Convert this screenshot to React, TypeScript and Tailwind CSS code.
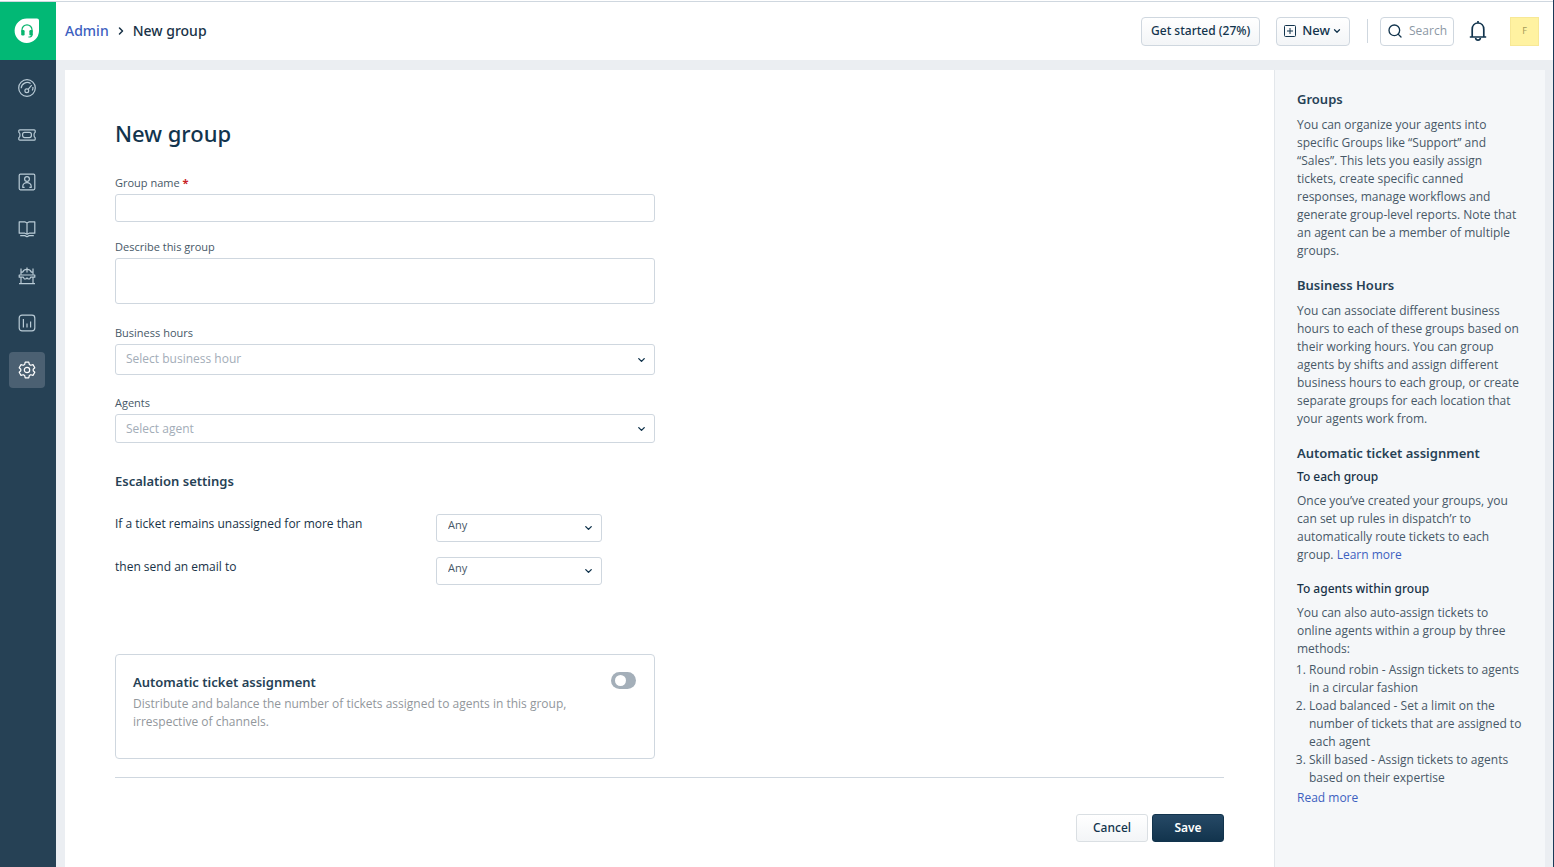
import { useState } from "react";
import type { ReactNode } from "react";
import { ChevronDown, ChevronRight, Search } from "lucide-react";

const navItems = [
  {
    label: "Dashboard",
    icon: (
      <>
        <circle cx="9" cy="9" r="8.3" />
        <path d="M3.2 9.2a6 6 0 0 1 9.4-4.6M14.9 8a6 6 0 0 1-.6 3.6M10.1 10.4l3.6-4.2" />
        <circle cx="8.8" cy="11.8" r="1.9" />
      </>
    ),
  },
  {
    label: "Tickets",
    icon: (
      <>
        <path d="M1.8 3.8h14.4a1 1 0 0 1 1 1v1.4c-1.6 1-1.6 4.6 0 5.6v1.4a1 1 0 0 1-1 1H1.8a1 1 0 0 1-1-1v-1.4c1.6-1 1.6-4.6 0-5.6V4.8a1 1 0 0 1 1-1z" />
        <rect x="4.6" y="6.4" width="8.8" height="5.2" rx="2" />
      </>
    ),
  },
  {
    label: "Contacts",
    icon: (
      <>
        <rect x="1.2" y="1.2" width="15.6" height="15.6" rx="1.2" />
        <circle cx="9" cy="6" r="2.4" />
        <path d="M6.6 14.4H4.8v-1.2a4.2 3.6 0 0 1 8.4 0v1.2h-1.8" />
      </>
    ),
  },
  {
    label: "Solutions",
    icon: (
      <>
        <path d="M1.2 1.8h5.6L9 3l2.2-1.2h5.6v11.4h-5.6L9 14.2l-2.2-1H1.2zM9 3v11" />
        <path d="M2.2 15.6h4.6L9 16.8l2.2-1.2h4.6" />
      </>
    ),
  },
  {
    label: "Forums",
    icon: (
      <>
        <path d="M3 1.4v6.4M15 1.4v6.4M3 10.2v6.2M15 10.2v6.2M1 16.6h16M9 .6v5" />
        <path d="M3 5.2h1.6C5.4 3.4 7 2.4 9 2.4s3.6 1 4.4 2.8H15" />
        <path d="M1.2 8h15.6v2.2h-4l-1.2 1.8h-1.4L9 10.8 7.8 12H6.4l-1.2-1.8h-4z" />
      </>
    ),
  },
  {
    label: "Analytics",
    icon: (
      <>
        <rect x="1.2" y="1.2" width="15.6" height="15.6" rx="2.8" />
        <path d="M5.4 5v8.4M9 9.6v3.8M12.6 7.6v5.8" />
      </>
    ),
  },
  {
    label: "Admin",
    active: true,
    icon: (
      <>
        <path d="M7.2 1.2h3.6l.5 2.2 1.5.9 2.2-.7 1.8 3.1L15.2 8.2v1.6l1.6 1.5-1.8 3.1-2.2-.7-1.5.9-.5 2.2H7.2l-.5-2.2-1.5-.9-2.2.7-1.8-3.1 1.6-1.5V8.2L1.2 6.7 3 3.6l2.2.7 1.5-.9z" />
        <circle cx="9" cy="9" r="2.7" />
      </>
    ),
  },
];

const methods = [
  "Round robin - Assign tickets to agents in a circular fashion",
  "Load balanced - Set a limit on the number of tickets that are assigned to each agent",
  "Skill based - Assign tickets to agents based on their expertise",
];

function Logo() {
  return (
    <svg width="26" height="26" viewBox="0 0 26 26" aria-hidden="true">
      <path d="M13 .5h10a2 2 0 0 1 2 2V13A12.2 12.2 0 1 1 13 .5z" fill="#fff" />
      <path
        d="M8 13v-1.2a5 5 0 0 1 10 0V13M18 16.4c0 1.8-1.6 2.6-3.6 2.6"
        fill="none"
        stroke="#08b56f"
        strokeWidth="1.2"
      />
      <rect x="7.2" y="12" width="3.4" height="5.4" rx="1.2" fill="#08b56f" />
      <rect x="15.4" y="12" width="3.4" height="5.4" rx="1.2" fill="#08b56f" />
    </svg>
  );
}

function Sidebar() {
  return (
    <aside className="w-14 shrink-0 bg-[#264155]">
      <a
        href="#home"
        aria-label="Home"
        className="flex h-[58px] items-center justify-center bg-[#02b875] pr-0.5"
      >
        <Logo />
      </a>
      <nav className="mt-2.5 flex flex-col gap-[11px] pl-[9px]">
        {navItems.map((item) => (
          <a
            key={item.label}
            href={`#${item.label.toLowerCase()}`}
            aria-label={item.label}
            className={`flex size-9 items-center justify-center rounded ${
              item.active ? "bg-[#4b6072] text-white" : "text-[#b9cbd6]"
            }`}
          >
            <svg
              width="18"
              height="18"
              viewBox="0 0 18 18"
              fill="none"
              stroke="currentColor"
              strokeWidth="1.2"
              strokeLinejoin="round"
            >
              {item.icon}
            </svg>
          </a>
        ))}
      </nav>
    </aside>
  );
}

function Header() {
  return (
    <header className="flex h-[58px] items-center justify-between bg-white pr-3.5 pl-[9px] font-['Noto_Sans',sans-serif]">
      <nav className="flex items-center text-sm font-medium text-[#183247]">
        <a href="#admin" className="text-[#3d5fc0]">
          Admin
        </a>
        <ChevronRight size={12} strokeWidth={3} className="mx-1.5" />
        <span>New group</span>
      </nav>
      <div className="flex items-center">
        <button className="h-[29px] rounded border border-[#cfd7df] bg-linear-to-b from-white to-[#f3f5f7] px-[9px] text-[12px] font-medium text-[#12344d]">
          Get started (27%)
        </button>
        <button className="ml-4 flex h-[29px] items-center rounded border border-[#cfd7df] bg-linear-to-b from-white to-[#f3f5f7] px-[7px] text-[13px] font-medium text-[#12344d]">
          <svg
            width="12"
            height="12"
            viewBox="0 0 12 12"
            fill="none"
            stroke="currentColor"
            className="mr-1.5"
          >
            <rect x=".5" y=".5" width="11" height="11" rx="1" />
            <path d="M6 3v6M3 6h6" />
          </svg>
          New
          <ChevronDown size={10} strokeWidth={3} className="ml-0.5" />
        </button>
        <span className="mr-3 ml-[17px] h-6 w-px bg-[#cfd7df]" />
        <label className="flex h-[29px] w-[74px] items-center rounded border border-[#cfd7df] pl-1.5 text-[#12344d]">
          <Search size={16} strokeWidth={2} className="shrink-0" />
          <input
            type="text"
            aria-label="Search"
            placeholder="Search"
            className="ml-1.5 w-full min-w-0 font-['Open_Sans',sans-serif] text-[12px] outline-none placeholder:text-[#8c98a5]"
          />
        </label>
        <button aria-label="Notifications" className="ml-3.5 text-[#12344d]">
          <svg
            width="20"
            height="22"
            viewBox="0 0 20 22"
            fill="none"
            stroke="currentColor"
            strokeWidth="1.7"
          >
            <path d="M4.2 17V9.4C4.2 5.6 6.6 3 10 3s5.8 2.6 5.8 6.4V17M1.8 17h16.4M10 1v2" />
            <path d="M7.6 18c.2 1.6 1 2.2 2.4 2.2s2.2-.6 2.4-2.2" />
          </svg>
        </button>
        <button
          aria-label="Profile"
          className="ml-[22px] size-[29px] border border-[#f7e896] bg-[#fff2a1] text-[9px] text-[#a59a58]"
        >
          F
        </button>
      </div>
    </header>
  );
}

type SelectProps = {
  id: string;
  className: string;
  options: string[];
};

function Select({ id, className, options }: SelectProps) {
  return (
    <div className="relative">
      <select
        id={id}
        className={`block w-full appearance-none rounded-[3px] border border-[#cfd7df] bg-white ${className}`}
      >
        {options.map((option) => (
          <option key={option}>{option}</option>
        ))}
      </select>
      <ChevronDown
        size={11}
        strokeWidth={3}
        className="pointer-events-none absolute top-1/2 right-2 -translate-y-1/2 text-[#12344d]"
      />
    </div>
  );
}

function FieldLabel({ id, children }: { id: string; children: ReactNode }) {
  return (
    <label
      htmlFor={id}
      className="mb-[3px] block text-[11px] leading-4 text-[#475867]"
    >
      {children}
    </label>
  );
}

function SectionTitle({ children }: { children: ReactNode }) {
  return (
    <h2 className="font-['Noto_Sans',sans-serif] text-[13px] leading-5 font-semibold text-[#264155]">
      {children}
    </h2>
  );
}

function GroupForm() {
  const [automatic, setAutomatic] = useState(false);

  return (
    <form className="min-w-0 flex-1 bg-white px-[50px] pt-[47px] pb-6">
      <h1 className="font-['Noto_Sans',sans-serif] text-[22px] leading-8 font-medium text-[#12344d]">
        New group
      </h1>

      <div className="mt-[26px] max-w-[540px]">
        <FieldLabel id="name">
          Group name <span className="font-bold text-[#c82124]">*</span>
        </FieldLabel>
        <input
          id="name"
          required
          className="mb-[17px] block h-7 w-full rounded-[3px] border border-[#cfd7df] px-2.5 text-[12px]"
        />

        <FieldLabel id="description">Describe this group</FieldLabel>
        <textarea
          id="description"
          className="mb-[21px] block h-[46px] w-full resize-none rounded-[3px] border border-[#cfd7df] px-2.5 text-[12px]"
        />

        <FieldLabel id="hours">Business hours</FieldLabel>
        <Select
          id="hours"
          className="h-[31px] px-2.5 pb-0.5 text-[12px] text-[#a3adb8]"
          options={["Select business hour"]}
        />

        <div className="mt-5 mb-7">
          <FieldLabel id="agents">Agents</FieldLabel>
          <Select
            id="agents"
            className="h-[29px] px-2.5 text-[12px] text-[#a3adb8]"
            options={["Select agent"]}
          />
        </div>

        <SectionTitle>Escalation settings</SectionTitle>
        <div className="mt-[23px] grid grid-cols-[321px_166px] gap-y-[15px] text-[12px] leading-5 text-[#183247]">
          <label htmlFor="unassigned">
            If a ticket remains unassigned for more than
          </label>
          <Select
            id="unassigned"
            className="h-7 px-[11px] pb-1.5 text-[11px] text-[#475867]"
            options={["Any"]}
          />
          <label htmlFor="recipient">then send an email to</label>
          <Select
            id="recipient"
            className="h-7 px-[11px] pb-1.5 text-[11px] text-[#475867]"
            options={["Any"]}
          />
        </div>

        <section className="mt-[69px] flex items-start justify-between rounded border border-[#cfd7df] py-[17px] pr-[18px] pl-[17px]">
          <div className="max-w-[450px] pb-2.5">
            <SectionTitle>Automatic ticket assignment</SectionTitle>
            <p className="mt-[3px] text-[12px] leading-[18px] text-[#92979c]">
              Distribute and balance the number of tickets assigned to agents in
              this group, irrespective of channels.
            </p>
          </div>
          <input
            type="checkbox"
            role="switch"
            aria-label="Automatic ticket assignment"
            checked={automatic}
            onChange={(e) => setAutomatic(e.target.checked)}
            className="flex h-[17px] w-[25px] appearance-none items-center rounded-full bg-[#a4afb9] pl-1 before:size-[11px] before:rounded-full before:bg-white checked:bg-[#02b875] checked:pl-2.5"
          />
        </section>
      </div>

      <hr className="mt-[18px] border-[#cfd7df]" />
      <div className="mt-9 flex justify-end gap-1 font-['Noto_Sans',sans-serif]">
        <button
          type="reset"
          className="h-7 w-[72px] rounded-[3px] border border-[#dadfe3] bg-linear-to-b from-white to-[#f3f5f7] text-[12px] font-medium text-[#12344d]"
        >
          Cancel
        </button>
        <button
          type="submit"
          className="h-7 w-[72px] rounded-[3px] border border-[#12344d] bg-linear-to-b from-[#264966] to-[#12344d] text-[12px] font-semibold text-white"
        >
          Save
        </button>
      </div>
    </form>
  );
}

function HelpPanel() {
  return (
    <aside className="w-[271px] shrink-0 border-l border-[#e3e7eb] bg-[#f5f7f9] pt-[19px] pr-[22px] pb-6 pl-[22px] text-[12px] leading-[18px] text-[#475867]">
      <SectionTitle>Groups</SectionTitle>
      <p className="mt-[7px] mb-[15px]">
        You can organize your agents into specific Groups like “Support” and
        “Sales”. This lets you easily assign tickets, create specific canned
        responses, manage workflows and generate group-level reports. Note that
        an agent can be a member of multiple groups.
      </p>
      <SectionTitle>Business Hours</SectionTitle>
      <p className="mt-[7px] mb-[15px]">
        You can associate different business hours to each of these groups based
        on their working hours. You can group agents by shifts and assign
        different business hours to each group, or create separate groups for
        each location that your agents work from.
      </p>
      <SectionTitle>Automatic ticket assignment</SectionTitle>
      <h3 className="mt-[5px] mb-1.5 font-['Noto_Sans',sans-serif] font-medium text-[#183247]">
        To each group
      </h3>
      <p>
        Once you’ve created your groups, you can set up rules in dispatch’r to
        automatically route tickets to each group.{" "}
        <a href="#learn-more" className="text-[#3d5fc0]">
          Learn more
        </a>
      </p>
      <h3 className="mt-4 mb-1.5 font-['Noto_Sans',sans-serif] font-medium text-[#183247]">
        To agents within group
      </h3>
      <p>
        You can also auto-assign tickets to online agents within a group by
        three methods:
      </p>
      <ol className="mt-[3px] list-decimal pl-3">
        {methods.map((method) => (
          <li key={method}>{method}</li>
        ))}
      </ol>
      <a href="#read-more" className="mt-0.5 block text-[#3d5fc0]">
        Read more
      </a>
    </aside>
  );
}

export default function App() {
  return (
    <div className="flex min-h-screen flex-col border-r border-[#1b3a57] bg-white font-['Open_Sans',sans-serif]">
      <div className="h-0.5 border-b border-[#cfd7df]" />
      <div className="flex flex-1">
        <Sidebar />
        <div className="flex min-w-0 flex-1 flex-col bg-[#ebeef2]">
          <Header />
          <main className="mt-2.5 mr-2 ml-[9px] flex flex-1">
            <GroupForm />
            <HelpPanel />
          </main>
        </div>
      </div>
    </div>
  );
}
